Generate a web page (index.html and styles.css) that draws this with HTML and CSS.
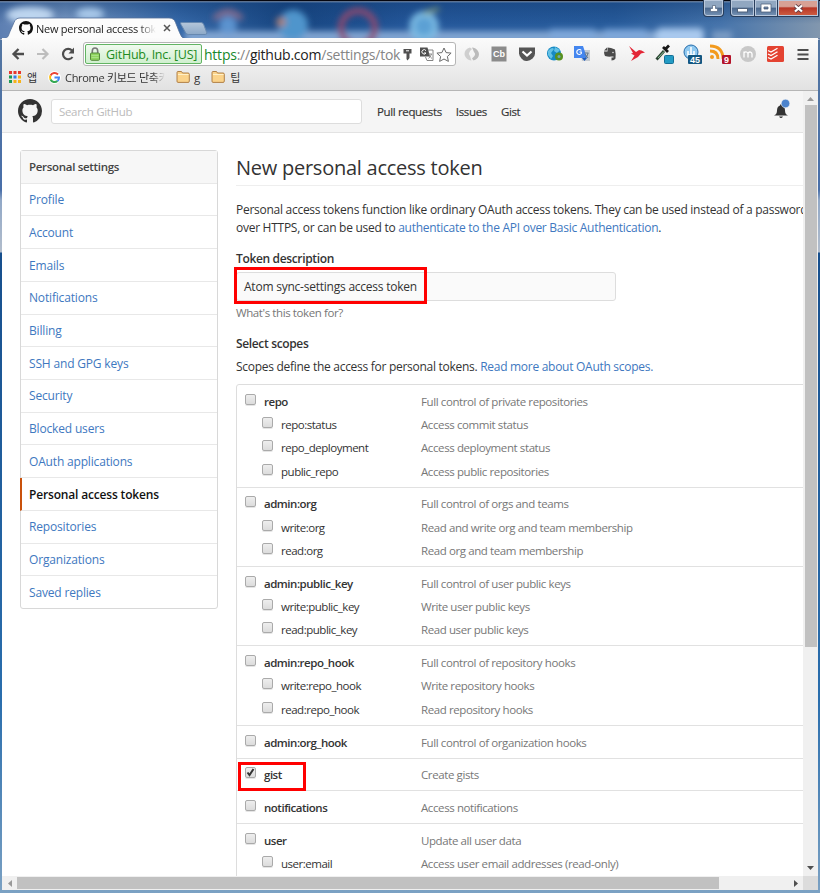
FILE: index.html
```html
<!DOCTYPE html>
<html lang="en">
<head>
<meta charset="utf-8">
<title>New personal access token</title>
<link rel="stylesheet" href="styles.css">
</head>
<body>
<svg width="0" height="0" class="defs"><symbol id="mark" viewBox="0 0 16 16"><path d="M8 0C3.58 0 0 3.58 0 8c0 3.54 2.29 6.53 5.47 7.59.4.07.55-.17.55-.38 0-.19-.01-.82-.01-1.49-2.01.37-2.53-.49-2.69-.94-.09-.23-.48-.94-.82-1.13-.28-.15-.68-.52-.01-.53.63-.01 1.08.58 1.23.82.72 1.21 1.87.87 2.33.66.07-.52.28-.87.51-1.07-1.78-.2-3.64-.89-3.64-3.95 0-.87.31-1.59.82-2.15-.08-.2-.36-1.02.08-2.12 0 0 .67-.21 2.2.82.64-.18 1.32-.27 2-.27.68 0 1.36.09 2 .27 1.53-1.04 2.2-.82 2.2-.82.44 1.1.16 1.92.08 2.12.51.56.82 1.27.82 2.15 0 3.07-1.87 3.75-3.65 3.95.29.25.54.73.54 1.48 0 1.07-.01 1.93-.01 2.2 0 .21.15.46.55.38A8.013 8.013 0 0016 8c0-4.42-3.58-8-8-8z"/></symbol>
<symbol id="folder" viewBox="0 0 14 12"><path d="M1 1.500q0-1 1-1h3.500l1 1.500H12q1.300 0 1.300 1.200v7q0 1.200-1.200 1.200H2q-1 0-1-1.200z" fill="#fbd38b" stroke="#a9763b" stroke-width=".9"/><path d="M2 3.500h10.500" stroke="#fff0c8"/></symbol></svg>
<div class="window">
  <div class="titlebar">
    <svg class="aero" width="820" height="40" viewBox="0 0 820 40">
      <defs>
        <linearGradient id="sky" x1="0" x2="1"><stop offset="0" stop-color="#5d7fb2"/><stop offset=".08" stop-color="#7d9cc6"/><stop offset=".22" stop-color="#3568a8"/><stop offset=".35" stop-color="#174580"/><stop offset=".5" stop-color="#24579a"/><stop offset=".75" stop-color="#275b9b"/><stop offset=".88" stop-color="#4674ab"/><stop offset="1" stop-color="#8297ae"/></linearGradient>
        <linearGradient id="shade" x1="0" x2="0" y1="0" y2="1"><stop offset="0" stop-color="#123c74" stop-opacity=".55"/><stop offset=".6" stop-color="#123c74" stop-opacity="0"/></linearGradient>
        <filter id="soft" x="-30%" y="-50%" width="160%" height="200%"><feGaussianBlur stdDeviation="3"/></filter>
        <linearGradient id="newtab" x1="0" x2="0" y1="0" y2="1"><stop offset="0" stop-color="#b4c6da"/><stop offset="1" stop-color="#8ca9c8"/></linearGradient>
      </defs>
      <rect width="820" height="40" fill="url(#sky)"/><rect width="820" height="40" fill="url(#shade)"/>
      <g filter="url(#soft)">
        <ellipse cx="30" cy="15" rx="24" ry="8" fill="#bdd5ef"/><ellipse cx="90" cy="14" rx="14" ry="6" fill="#a9c9ea"/>
        <rect x="185" y="31" width="480" height="12" fill="#81a5d2"/>
        <circle cx="228" cy="25" r="9" fill="#5c93cf"/><path d="M214 19q14-14 28 0" fill="none" stroke="#8c6d8c" stroke-width="5"/>
        <circle cx="293" cy="25" r="15" fill="#4f95cc"/><circle cx="281" cy="22" r="5" fill="#a98078"/>
        <circle cx="358" cy="28" r="17" fill="none" stroke="#8d4a70" stroke-width="6"/>
        <circle cx="424" cy="26" r="12" fill="#5ba0d4" stroke="#80bfe6" stroke-width="5"/><path d="M424 13l15-4" stroke="#93a870" stroke-width="3"/>
        <rect x="656" y="28" width="48" height="16" rx="5" fill="#a9c9ee"/><rect x="550" y="29" width="45" height="10" fill="#7ea7da"/><rect x="604" y="29" width="42" height="10" fill="#7ea7da"/><rect x="712" y="31" width="20" height="10" fill="#7b9cc4"/>
      </g>
      <rect width="820" height="1.500" fill="#05060f"/><rect y="1.500" width="820" height=".7" fill="#a8bcd8"/>
      <path d="M181 22.500h20q2 0 2.700 2l3 8q.7 2-1.500 2h-17q-2 0-2.700-2l-4.500-8q-1-2 0-2z" fill="url(#newtab)" stroke="#6789b0"/>
      <path d="M0 40v-1.500h3c5 0 5-2 7-7l4-9q1.500-4.500 6-4.500h149q5 0 6.500 4.500l4 10q2 6 5.500 6H820V40z" fill="#fcfcfc" stroke="#53709a" stroke-width=".8"/>
    </svg>
    <div class="tab"><svg width="14" height="14" fill="#111"><use href="#mark"/></svg><span class="tabtitle">New personal access toke</span><svg width="8" height="8"><path d="M1 1l6 6M7 1L1 7" stroke="#555" stroke-width="1.500"/></svg></div>
    <div class="controls">
      <span class="ctl user"><svg width="10" height="9"><path d="M3.500 1.500h3v3h2v3h-7v-3h2z" fill="#fff" stroke="#51637d" stroke-width=".7"/></svg></span>
      <span class="ctl min"><svg width="11" height="5"><rect x=".5" y=".5" width="10" height="3.500" fill="#fff" stroke="#51637d"/></svg></span>
      <span class="ctl max"><svg width="12" height="10"><path d="M1 1h10v8H1zM4 4v2h4V4z" fill="#fff" fill-rule="evenodd" stroke="#51637d" stroke-width=".8"/></svg></span>
      <span class="ctl close"><svg width="11" height="9"><path d="M2 1.500l7 6M9 1.500l-7 6" stroke="#604048" stroke-width="3.800"/><path d="M2 1.500l7 6M9 1.500l-7 6" stroke="#fff" stroke-width="2.300"/></svg></span>
    </div>
  </div>
  <div class="chrome">
    <div class="toolbar">
      <svg class="nav" width="14" height="14"><path d="M13 7H2.500M7.500 2l-5 5 5 5" fill="none" stroke="#4d4d4d" stroke-width="2.300"/></svg>
      <svg class="nav" width="14" height="14"><path d="M1 7h10.500M6.500 2l5 5-5 5" fill="none" stroke="#bdbdbd" stroke-width="2.200"/></svg>
      <svg class="nav" width="14" height="14"><path d="M11.500 10A5.200 5.200 0 1 1 11 3.500" fill="none" stroke="#4d4d4d" stroke-width="2.200"/><path d="M13 .5v6H7.500z" fill="#4d4d4d"/></svg>
      <div class="omnibox">
        <div class="ev"><svg width="10" height="14"><path d="M2.300 7V4q0-3 2.700-3t2.700 3v3" fill="none" stroke="#777" stroke-width="1.600"/><rect x=".5" y="6" width="9" height="7.300" rx="1" fill="#8ed45d" stroke="#55883c"/><path d="M1.500 8.500h7M1.500 10.500h7" stroke="#b5e797" stroke-width=".7"/></svg><span>GitHub, Inc. [US]</span></div>
        <div class="url"><b>https</b><i>://</i>github.com<i>/settings/tok</i></div>
        <svg class="key" width="9" height="13"><path d="M.5 1h8v4.500h-2V10L4.500 12.500 3.500 11V5.500h-3z" fill="#505050"/><path d="M3 2.800h3" stroke="#fff"/></svg>
        <svg class="tr" width="15" height="14"><path d="M9 3h5v10.500H8L6.500 10" fill="#fff" stroke="#777" stroke-width=".9"/><path d="M1 .5h7.500l2.500 9H1z" fill="#505050"/><path d="M7 3.700A2.200 2.200 0 1 0 7 6H5" fill="none" stroke="#fff"/><path d="M9.500 7H13M12.500 7q-1 3-3 4.500M10.500 8.500q1 2 2.500 3" fill="none" stroke="#777" stroke-width=".8"/></svg>
        <svg class="star" width="16" height="15"><path d="M8 1l2.100 4.600 5 .5-3.700 3.400 1 4.900L8 12l-4.400 2.400 1-4.900L.9 6.100l5-.5z" fill="#fff" stroke="#6a6a6a"/></svg>
      </div>
      <div class="exts">
        <span><svg width="18" height="18"><path d="M7 2.500C-1 4.500 0 14.500 8.500 15.500L7 11Q4 8 9 4z" fill="#cfcfcf"/><path d="M10.500 15.500c8-2 7-12-1.500-13L11 7q3 3-2 6.500z" fill="#bbb"/></svg></span>
        <span><svg width="16" height="16"><rect width="15" height="15" y=".5" x=".5" fill="#8b8b8b"/><text x="8" y="11" text-anchor="middle" class="cb">Cb</text></svg></span>
        <span><svg width="18" height="16"><path d="M1 1.500h16v6q0 3-2.500 5T9 15t-5.500-2.500T1 7.500z" fill="#555"/><path d="M4.500 5.500L9 9.500l4.500-4" fill="none" stroke="#fff" stroke-width="2.200"/></svg></span>
        <span><svg width="18" height="18"><circle cx="8" cy="8.500" r="7" fill="#168ac4"/><path d="M2 6q4-5 6-2L5 8l2 3-2 3-3-4zM9 2l5 3-3 3-3-2z" fill="#64c1e5"/><circle cx="13" cy="11.500" r="4" fill="#57901f"/><circle cx="13" cy="11.500" r="1.500" fill="#6aa7b8"/></svg></span>
        <span><svg width="18" height="18"><path d="M7 5h10v11H9z" fill="#c6cbd1"/><path d="M1 1h9l4 12H1z" fill="#4486ef"/><path d="M9 13h5l-2.500 3z" fill="#1e5cbc"/><path d="M8.300 5.500A2.500 2.500 0 1 0 8.300 8.500V7H6.500" fill="none" stroke="#fff" stroke-width="1.200"/><path d="M11.500 8h4M15 8q0 3-3 5M12 9l3 4" stroke="#64788a" fill="none"/></svg></span>
        <span><svg width="14" height="16"><path d="M4.500 1.500L8 2l4 1.500q1 4 .5 9-1 2-4 2v-3h2v-1H8Q6 11 2 10 1 8 1 5.500h3.500z" fill="#4b4b4b"/><path d="M1 4.500L4 1.500v3z" fill="#4b4b4b"/><circle cx="10" cy="6.500" r=".8" fill="#ddd"/></svg></span>
        <span><svg width="18" height="18"><path d="M1 1l7 6 3-2 2.500.5L17 7.500l-4 1-3 3.500-7 4 3.500-5.500L3 8.500 5 8z" fill="#e32636"/></svg></span>
        <span><svg width="20" height="22"><path d="M1.500 16.500L9 8" stroke="#2d4434" stroke-width="2.800"/><path d="M3 15l6-6.500" stroke="#8fc59b"/><path d="M8 4l5 5M9.500 7L14 2.500" stroke="#171717" stroke-width="2.800"/><rect x="9.500" y="12.500" width="9" height="8" rx="1" fill="#239bc4" stroke="#146f96"/></svg></span>
        <span><svg width="20" height="22"><circle cx="8" cy="9" r="7" fill="#90c9f0" stroke="#246cac"/><path d="M8 4v9M5 8v4h6V8" stroke="#fff" stroke-width="1.500" fill="none"/><rect x="5" y="12" width="14" height="9" rx="1" fill="#135782"/><text x="12" y="20" text-anchor="middle" class="badge">45</text></svg></span>
        <span><svg width="22" height="22"><path d="M1 3Q14 3 14 16M1 8q8 0 8 8" fill="none" stroke="#f29a1e" stroke-width="2.800"/><circle cx="3" cy="14" r="2" fill="#f29a1e"/><rect x="13" y="12" width="9" height="9" rx="1" fill="#b4132a"/><text x="17.500" y="20" text-anchor="middle" class="badge">9</text></svg></span>
        <span><svg width="16" height="16"><circle cx="8" cy="8" r="8" fill="#c8c8c8"/><path d="M4 11.500V5.500M4 7q1-1.500 2.500-1T8 8v3.500M8 7.500q1-2 2.500-1.300T12 8v3.500" fill="none" stroke="#fff" stroke-width="1.300"/></svg></span>
        <span><svg width="17" height="16"><rect width="17" height="16" rx="1.500" fill="#e44332"/><path d="M1 4.500L4 6l6.500-3.700M1 8l3 1.500 6.500-3.700M1 11.500L4 13l6.500-3.700" stroke="#fff" stroke-width="1.300" fill="none"/></svg></span>
        <span><svg width="12" height="13"><path d="M.5 2h11M.5 6.500h11M.5 11h11" stroke="#4d4d4d" stroke-width="2.200"/></svg></span>
      </div>
    </div>
    <div class="bookmarks">
      <svg class="apps" width="12" height="12"><path d="M0 1.500h3M4.500 1.500h3M9 1.500h3" stroke="#e8372c" stroke-width="3"/><path d="M0 6h3M0 10.500h3" stroke="#1b9b54" stroke-width="3"/><path d="M4.500 6h3" stroke="#347de8" stroke-width="3"/><path d="M9 6h3M4.500 10.500h3M9 10.500h3" stroke="#f7b219" stroke-width="3"/></svg>
      <span class="b1">앱</span>
      <svg class="g" width="13" height="13" viewBox="0 0 13 13"><circle cx="6.500" cy="6.500" r="6.500" fill="#fff"/><path d="M10 3.500A4.600 4.600 0 0 0 2.500 4.500" stroke="#ea4335" stroke-width="2" fill="none"/><path d="M2.500 4.500a4.500 4.500 0 0 0 0 4" stroke="#fbbc05" stroke-width="2" fill="none"/><path d="M2.500 8.500A4.600 4.600 0 0 0 9.500 10" stroke="#34a853" stroke-width="2" fill="none"/><path d="M9.500 10A4.600 4.600 0 0 0 11 6.500H6.500" stroke="#4285f4" stroke-width="2" fill="none"/></svg>
      <span class="b2">Chrome 키보드 단축키</span>
      <svg class="f1" width="14" height="12"><use href="#folder"/></svg><span class="b3">g</span>
      <svg class="f2" width="14" height="12"><use href="#folder"/></svg><span class="b4">팁</span>
    </div>
  </div>
  <div class="view">
    <div class="page">
      <header><svg width="24" height="24" fill="#333"><use href="#mark"/></svg><div class="search">Search GitHub</div><nav><a>Pull requests</a><a>Issues</a><a>Gist</a></nav>
        <svg class="bell" width="17" height="20"><path d="M0 16.500q3-1 3-5 0-4 3-5V5.500h2v1q3 1 3 5 0 4 3 5zM5 17.500h4q-2 3-4 0z" fill="#333"/><circle cx="11.500" cy="4.500" r="4.300" fill="#4c83cc" stroke="#f5f5f5" stroke-width=".6"/></svg>
      </header>
      <div class="columns">
        <aside><h3>Personal settings</h3><a>Profile</a><a>Account</a><a>Emails</a><a>Notifications</a><a>Billing</a><a>SSH and GPG keys</a><a>Security</a><a>Blocked users</a><a>OAuth applications</a><a class="on">Personal access tokens</a><a>Repositories</a><a>Organizations</a><a>Saved replies</a></aside>
        <main>
          <h1>New personal access token</h1>
          <p class="intro">Personal access tokens function like ordinary OAuth access tokens. They can be used instead of a password<br>over HTTPS, or can be used to <a>authenticate to the API over Basic Authentication</a>.</p>
          <h4 class="lab">Token description</h4>
          <div class="input"><span>Atom sync-settings access token</span><i class="hl token"></i></div>
          <p class="help">What's this token for?</p>
          <h4 class="sel">Select scopes</h4>
          <p class="scopeintro">Scopes define the access for personal tokens. <a>Read more about OAuth scopes.</a></p>
          <div class="scopes">
            <section><div class="row"><i class="cb-box"></i><b>repo</b><em>Full control of private repositories</em></div><div class="row sub"><i class="cb-box"></i><b>repo:status</b><em>Access commit status</em></div><div class="row sub"><i class="cb-box"></i><b>repo_deployment</b><em>Access deployment status</em></div><div class="row sub"><i class="cb-box"></i><b>public_repo</b><em>Access public repositories</em></div></section>
            <section><div class="row"><i class="cb-box"></i><b>admin:org</b><em>Full control of orgs and teams</em></div><div class="row sub"><i class="cb-box"></i><b>write:org</b><em>Read and write org and team membership</em></div><div class="row sub"><i class="cb-box"></i><b>read:org</b><em>Read org and team membership</em></div></section>
            <section><div class="row"><i class="cb-box"></i><b>admin:public_key</b><em>Full control of user public keys</em></div><div class="row sub"><i class="cb-box"></i><b>write:public_key</b><em>Write user public keys</em></div><div class="row sub"><i class="cb-box"></i><b>read:public_key</b><em>Read user public keys</em></div></section>
            <section><div class="row"><i class="cb-box"></i><b>admin:repo_hook</b><em>Full control of repository hooks</em></div><div class="row sub"><i class="cb-box"></i><b>write:repo_hook</b><em>Write repository hooks</em></div><div class="row sub"><i class="cb-box"></i><b>read:repo_hook</b><em>Read repository hooks</em></div></section>
            <section><div class="row"><i class="cb-box"></i><b>admin:org_hook</b><em>Full control of organization hooks</em></div></section>
            <section><div class="row"><i class="cb-box"><svg width="9" height="9"><path d="M1.500 4.500l2 2.500 4-6" fill="none" stroke="#333" stroke-width="2"/></svg></i><b>gist</b><em>Create gists</em></div><i class="hl gist"></i></section>
            <section><div class="row"><i class="cb-box"></i><b>notifications</b><em>Access notifications</em></div></section>
            <section><div class="row"><i class="cb-box"></i><b>user</b><em>Update all user data</em></div><div class="row sub"><i class="cb-box"></i><b>user:email</b><em>Access user email addresses (read-only)</em></div></section>
          </div>
        </main>
      </div>
    </div>
    <div class="vbar"><svg width="7" height="4"><path d="M0 4l3.500-4L7 4z" fill="#999"/></svg><div class="vthumb"></div><svg width="7" height="4"><path d="M0 0l3.500 4L7 0z" fill="#505050"/></svg></div>
    <div class="hbar"><svg width="4" height="7"><path d="M4 0L0 3.500 4 7z" fill="#999"/></svg><div class="hthumb"></div><svg width="4" height="7"><path d="M0 0l4 3.500L0 7z" fill="#505050"/></svg></div>
    <div class="corner"></div>
  </div>
</div>
</body>
</html>
```
FILE: styles.css
```css
* { box-sizing: border-box; }
body { margin: 0; font-family: "Open Sans", "Noto Sans CJK KR", sans-serif; font-size: 12px; color: #333; overflow: hidden; }
svg { display: block; flex: none; }
.defs { position: absolute; }
.window { width: 820px; height: 893px; padding: 0 2px 3px; display: flex; flex-direction: column; background: linear-gradient(#55779f 0, #496fa9 190px, #91a8c7 200px, #b2bdcc 252px, #174f8d 253px, #2a6ead 700px, #7ba1c3 893px); position: relative; }
.titlebar { height: 38px; flex: none; position: relative; display: flex; justify-content: space-between; }
.aero { position: absolute; left: -2px; top: 0; }
.tab { position: relative; display: flex; align-items: center; height: 20px; margin: 18px 0 0 17px; }
.tabtitle { width: 121px; margin: 0 6px 0 3px; font-size: 11px; letter-spacing: -.26px; color: #222; white-space: nowrap; -webkit-mask-image: linear-gradient(90deg, #000 85%, transparent 99%); }
.controls { position: relative; display: flex; margin-right: -1px; height: 17px; }
.ctl { display: flex; align-items: center; justify-content: center; border: 1px solid #293e5c; border-top: 0; box-shadow: inset 0 0 0 1px #b9c8dc; background: linear-gradient(#91a7c1 45%, #49668c 50%, #7895b7); }
.user { width: 21px; margin-right: 6px; border-radius: 0 0 4px 4px; }
.min { width: 25px; border-radius: 0 0 0 4px; padding-top: 5px; }
.max { width: 23px; border-left: 0; }
.close { width: 41px; border-left: 0; background: linear-gradient(#d7a195 40%, #b73727 50%, #cf6044); }
.chrome { height: 53px; flex: none; background: linear-gradient(#fbfbfb, #e2e2e2); border-bottom: 1px solid #b6b6b6; position: relative; }
.toolbar { display: flex; align-items: center; height: 32px; padding-left: 9px; }
.nav { margin-right: 11px; }
.omnibox { width: 373px; height: 24px; margin-left: -3px; border: 1px solid #b5b5b5; border-radius: 3px; background: #fff; display: flex; align-items: center; padding-left: 1px; }
.ev { width: 117px; height: 20px; flex: none; border: 1px solid #62b463; border-radius: 2px; background: linear-gradient(#f0faee, #d0efcf); color: #228b22; display: flex; align-items: center; gap: 6px; padding-left: 4px; font-size: 12.5px; letter-spacing: -.26px; white-space: nowrap; }
.url { width: 197px; margin-left: 2px; font-size: 14px; letter-spacing: -.23px; color: #222; white-space: nowrap; }
.url b { font-weight: 400; color: #17882b; } .url i { font-style: normal; color: #858585; }
.key { margin-left: 2px; } .tr { margin-left: 7px; } .star { margin-left: 2px; }
.exts { display: flex; flex: 1; padding: 0 1px 0 2px; height: 22px; }
.exts span { flex: 1; display: flex; align-items: center; justify-content: center; }
.cb { font: bold 9px "Liberation Sans"; fill: #fff; }
.badge { font: bold 9px "Liberation Sans"; fill: #fff; }
.bookmarks { display: flex; align-items: center; height: 16px; padding-left: 7px; margin-top: -1px; font-size: 11.5px; white-space: nowrap; }
.b1 { width: 14px; margin: 0 7px 0 6px; font-size: 11px; }
.g { margin-right: 4px; }
.b2 { width: 101px; margin-right: 10px; font-size: 11px; letter-spacing: -.3px; -webkit-mask-image: linear-gradient(90deg, #000 86%, transparent 99%); }
.b3 { margin: 0 11px 0 4px; } .b4 { margin-left: 5px; font-size: 11px; }
.view { flex: 1; min-height: 0; position: relative; display: grid; grid-template: 785px 14px / 801px 15px; background: #fff; }
.page { overflow: hidden; background: #fff; }
header { height: 42px; background: #f5f5f5; border-bottom: 1px solid #e3e3e3; display: flex; align-items: center; padding: 0 12px 1px 16px; }
.search { width: 311px; height: 25px; margin-left: 9px; border: 1px solid #ddd; border-radius: 3px; background: #fff; color: #bbb; line-height: 23px; padding-left: 7px; font-size: 11.5px; letter-spacing: -.32px; }
nav { display: flex; gap: 14px; margin-left: 15px; font-size: 11.5px; flex: 1; letter-spacing: -.36px; -webkit-text-stroke: .15px #333; }
.bell { margin-top: -4px; }
.columns { display: flex; align-items: flex-start; padding: 17px 0 0 18px; }
aside { width: 198px; flex: none; height: 459px; border: 1px solid #d8d8d8; border-radius: 3px; display: flex; flex-direction: column; font-size: 12px; letter-spacing: -.17px; }
aside > * { flex: 1; margin: 0; padding-left: 8px; display: flex; align-items: center; border-bottom: 1px solid #e8e8e8; color: #4078c0; }
aside > :last-child { border-bottom: 0; }
aside h3 { background: #f7f7f7; color: #444; font-size: 11.5px; font-weight: 600; letter-spacing: -.3px; }
aside .on { color: #111; font-weight: 600; border-left: 2px solid #c9510c; padding-left: 7px; margin-left: -1px; }
main { margin-left: 18px; width: 640px; flex: none; }
main a { color: #4078c0; }
h1 { margin: 0; height: 36px; border-bottom: 1px solid #eee; font-size: 20px; font-weight: 400; line-height: 35px; letter-spacing: -.25px; white-space: nowrap; }
.intro { margin: 15px 0 0; line-height: 18px; font-size: 12px; letter-spacing: -.27px; white-space: nowrap; }
h4 { margin: 0; font-size: 12px; font-weight: 600; line-height: 18px; letter-spacing: -.35px; }
.lab { margin-top: 13px; }
.input { position: relative; width: 380px; height: 29px; margin-top: 4px; border: 1px solid #ddd; border-radius: 3px; background: #fafafa; line-height: 27px; padding-left: 7px; letter-spacing: -.23px; }
.hl { position: absolute; border: 3px solid #f00; }
.token { left: -3px; top: -6px; width: 193px; height: 37px; }
.help { margin: 3px 0 0; line-height: 18px; color: #777; font-size: 11.5px; letter-spacing: -.4px; }
.sel { margin-top: 13px; }
.scopeintro { margin: 5px 0 0; line-height: 18px; letter-spacing: -.28px; }
.scopes { margin-top: 8px; border: 1px solid #ddd; border-radius: 3px; }
section { position: relative; padding: 4.500px 0 4px; border-bottom: 1px solid #e1e1e1; }
.row { height: 23.300px; display: grid; grid-template-columns: 11px 157px 1fr; column-gap: 8px; align-items: center; padding-left: 8px; font-size: 11.5px; letter-spacing: -.4px; white-space: nowrap; }
.row b { font-weight: 600; color: #333; margin-right: -8px; letter-spacing: -.48px; }
.row em { font-style: normal; color: #777; margin-left: -8px; }
.sub { padding-left: 25px; grid-template-columns: 11px 140px 1fr; }
.row.sub b { font-weight: 400; }
.cb-box { width: 11px; height: 11px; margin-top: -4px; border: 1px solid #aaa; border-radius: 2px; background: linear-gradient(#eee, #dcdcdc); box-shadow: 0 1px 0 #e5e5e5; }
.gist { left: 1px; top: 3px; width: 68px; height: 29px; }
.vbar { background: #f0f0f0; display: flex; flex-direction: column; align-items: center; padding: 6px 0; }
.vthumb { width: 12px; height: 542px; background: #c1c1c1; margin: 4px 0 auto; }
.hbar { background: #f0f0f0; display: flex; align-items: center; padding: 0 5px 0 6px; }
.hthumb { width: 702px; height: 12px; background: #c1c1c1; margin: 0 auto 0 5px; }
.corner { background: #dcdcdc; }
```
